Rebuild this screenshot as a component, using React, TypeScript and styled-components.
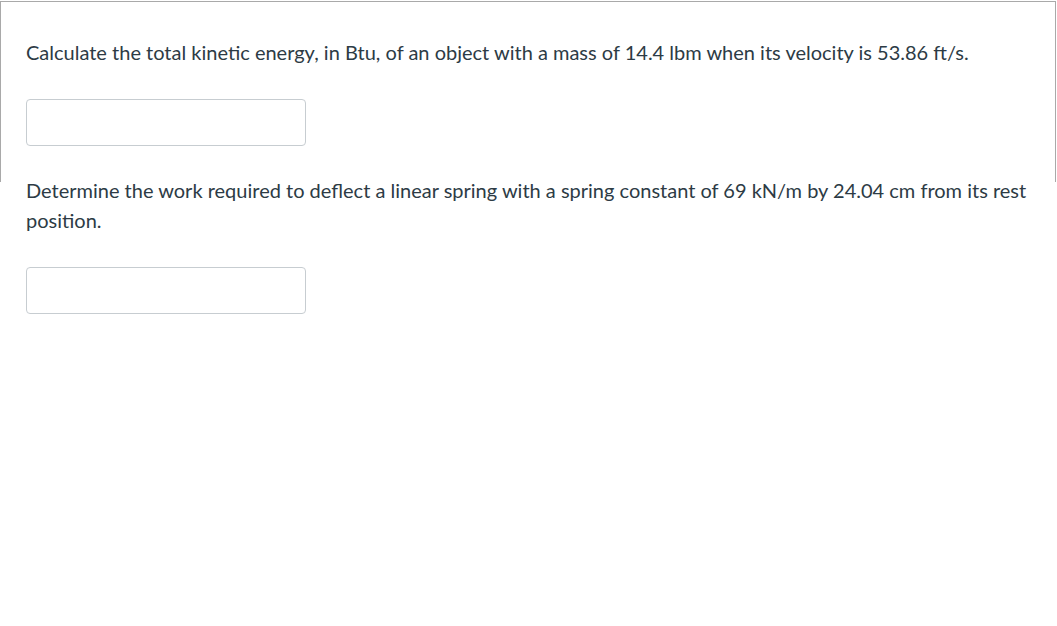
import React from "react";
import styled, { createGlobalStyle } from "styled-components";

const questions = [
  "Calculate the total kinetic energy, in Btu, of an object with a mass of 14.4 lbm when its velocity is 53.86 ft/s.",
  "Determine the work required to deflect a linear spring with a spring constant of 69 kN/m by 24.04 cm from its rest position.",
];

const App = () => {
  return (
    <Page>
      <GlobalStyle />
      <FramedQuestion>
        <QuestionText>{questions[0]}</QuestionText>
        <AnswerInput type="text" aria-label="Answer 1" />
      </FramedQuestion>
      <Question>
        <QuestionText>{questions[1]}</QuestionText>
        <AnswerInput type="text" aria-label="Answer 2" />
      </Question>
    </Page>
  );
};

export default App;

const GlobalStyle = createGlobalStyle`
  html, body {
    margin: 0;
    padding: 0;
    background: #fff;
  }
  body {
    font-family: Lato, "Liberation Sans", sans-serif;
    color: #2d3b45;
  }
`;

const Page = styled.div`
  width: 1057px;
  min-height: 626px;
  padding-top: 1px;
  box-sizing: border-box;
`;

const FramedQuestion = styled.section`
  box-sizing: border-box;
  width: 1056px;
  height: 181px;
  border: 1px solid #a9a9a9;
  border-bottom: none;
  padding: 35px 25px 0;
`;

const Question = styled.section`
  box-sizing: border-box;
  margin-top: -7px;
  padding: 0 26px;
`;

const QuestionText = styled.p`
  margin: 0;
  font-size: 20px;
  line-height: 30px;
  font-family: Lato, "Liberation Sans", sans-serif;
  color: #2d3b45;
`;

const AnswerInput = styled.input`
  display: block;
  box-sizing: border-box;
  margin-top: 32px;
  width: 280px;
  height: 47px;
  border: 1px solid #c7cdd1;
  border-radius: 4px;
  background: #fff;
  padding: 0 10px;
  font-family: Lato, "Liberation Sans", sans-serif;
  font-size: 16px;
  outline: none;
`;
